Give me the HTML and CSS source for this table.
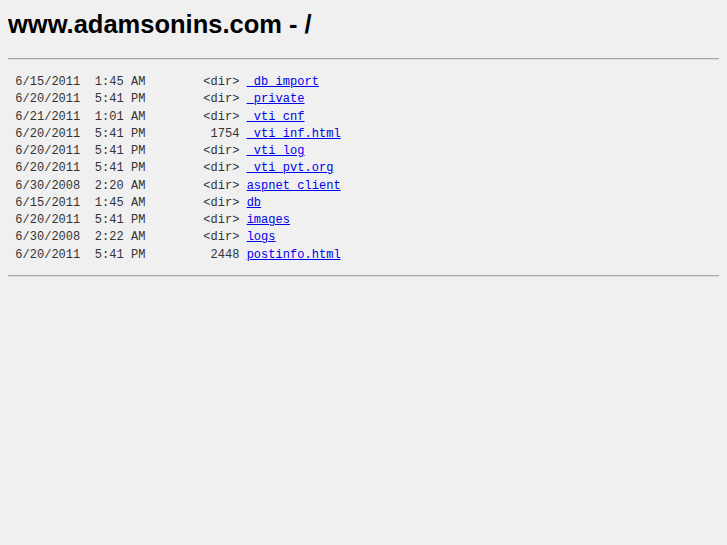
FILE: index.html
```html
<!DOCTYPE html>
<html>
<head>
    <meta charset="UTF-8">
    <title>www.adamsonins.com - /</title>
    <link rel="stylesheet" href="styles.css">
</head>
<body>
    <h1 class="title">www.adamsonins.com - /</h1>
    <hr class="rule">
    <pre class="listing"> 6/15/2011  1:45 AM        &lt;dir&gt; <a href="#">_db_import</a><br> 6/20/2011  5:41 PM        &lt;dir&gt; <a href="#">_private</a><br> 6/21/2011  1:01 AM        &lt;dir&gt; <a href="#">_vti_cnf</a><br> 6/20/2011  5:41 PM         1754 <a href="#">_vti_inf.html</a><br> 6/20/2011  5:41 PM        &lt;dir&gt; <a href="#">_vti_log</a><br> 6/20/2011  5:41 PM        &lt;dir&gt; <a href="#">_vti_pvt.org</a><br> 6/30/2008  2:20 AM        &lt;dir&gt; <a href="#">aspnet_client</a><br> 6/15/2011  1:45 AM        &lt;dir&gt; <a href="#">db</a><br> 6/20/2011  5:41 PM        &lt;dir&gt; <a href="#">images</a><br> 6/30/2008  2:22 AM        &lt;dir&gt; <a href="#">logs</a><br> 6/20/2011  5:41 PM         2448 <a href="#">postinfo.html</a><br></pre>
    <hr class="rule">
</body>
</html>
```

FILE: styles.css
```css
body {
    margin: 8px;
    background-color: #f0f0f0;
    font-family: "Liberation Sans", Arial, sans-serif;
}

.title {
    font-size: 25.5px;
    font-weight: bold;
    line-height: 32px;
    margin: 0 0 18px 0;
    color: #000;
}

.rule {
    margin: 8px 0;
    border: none;
    border-top: 1px solid #a8a8a8;
    border-bottom: 1px solid #dcdcdc;
    height: 0;
}

.listing {
    font-family: "Courier New", "Liberation Mono", monospace;
    font-size: 12px;
    letter-spacing: 0.03px;
    line-height: 17.25px;
    margin: 14px 0 11px 0;
    color: #333;
}

.listing a {
    color: #0000ee;
}
```
